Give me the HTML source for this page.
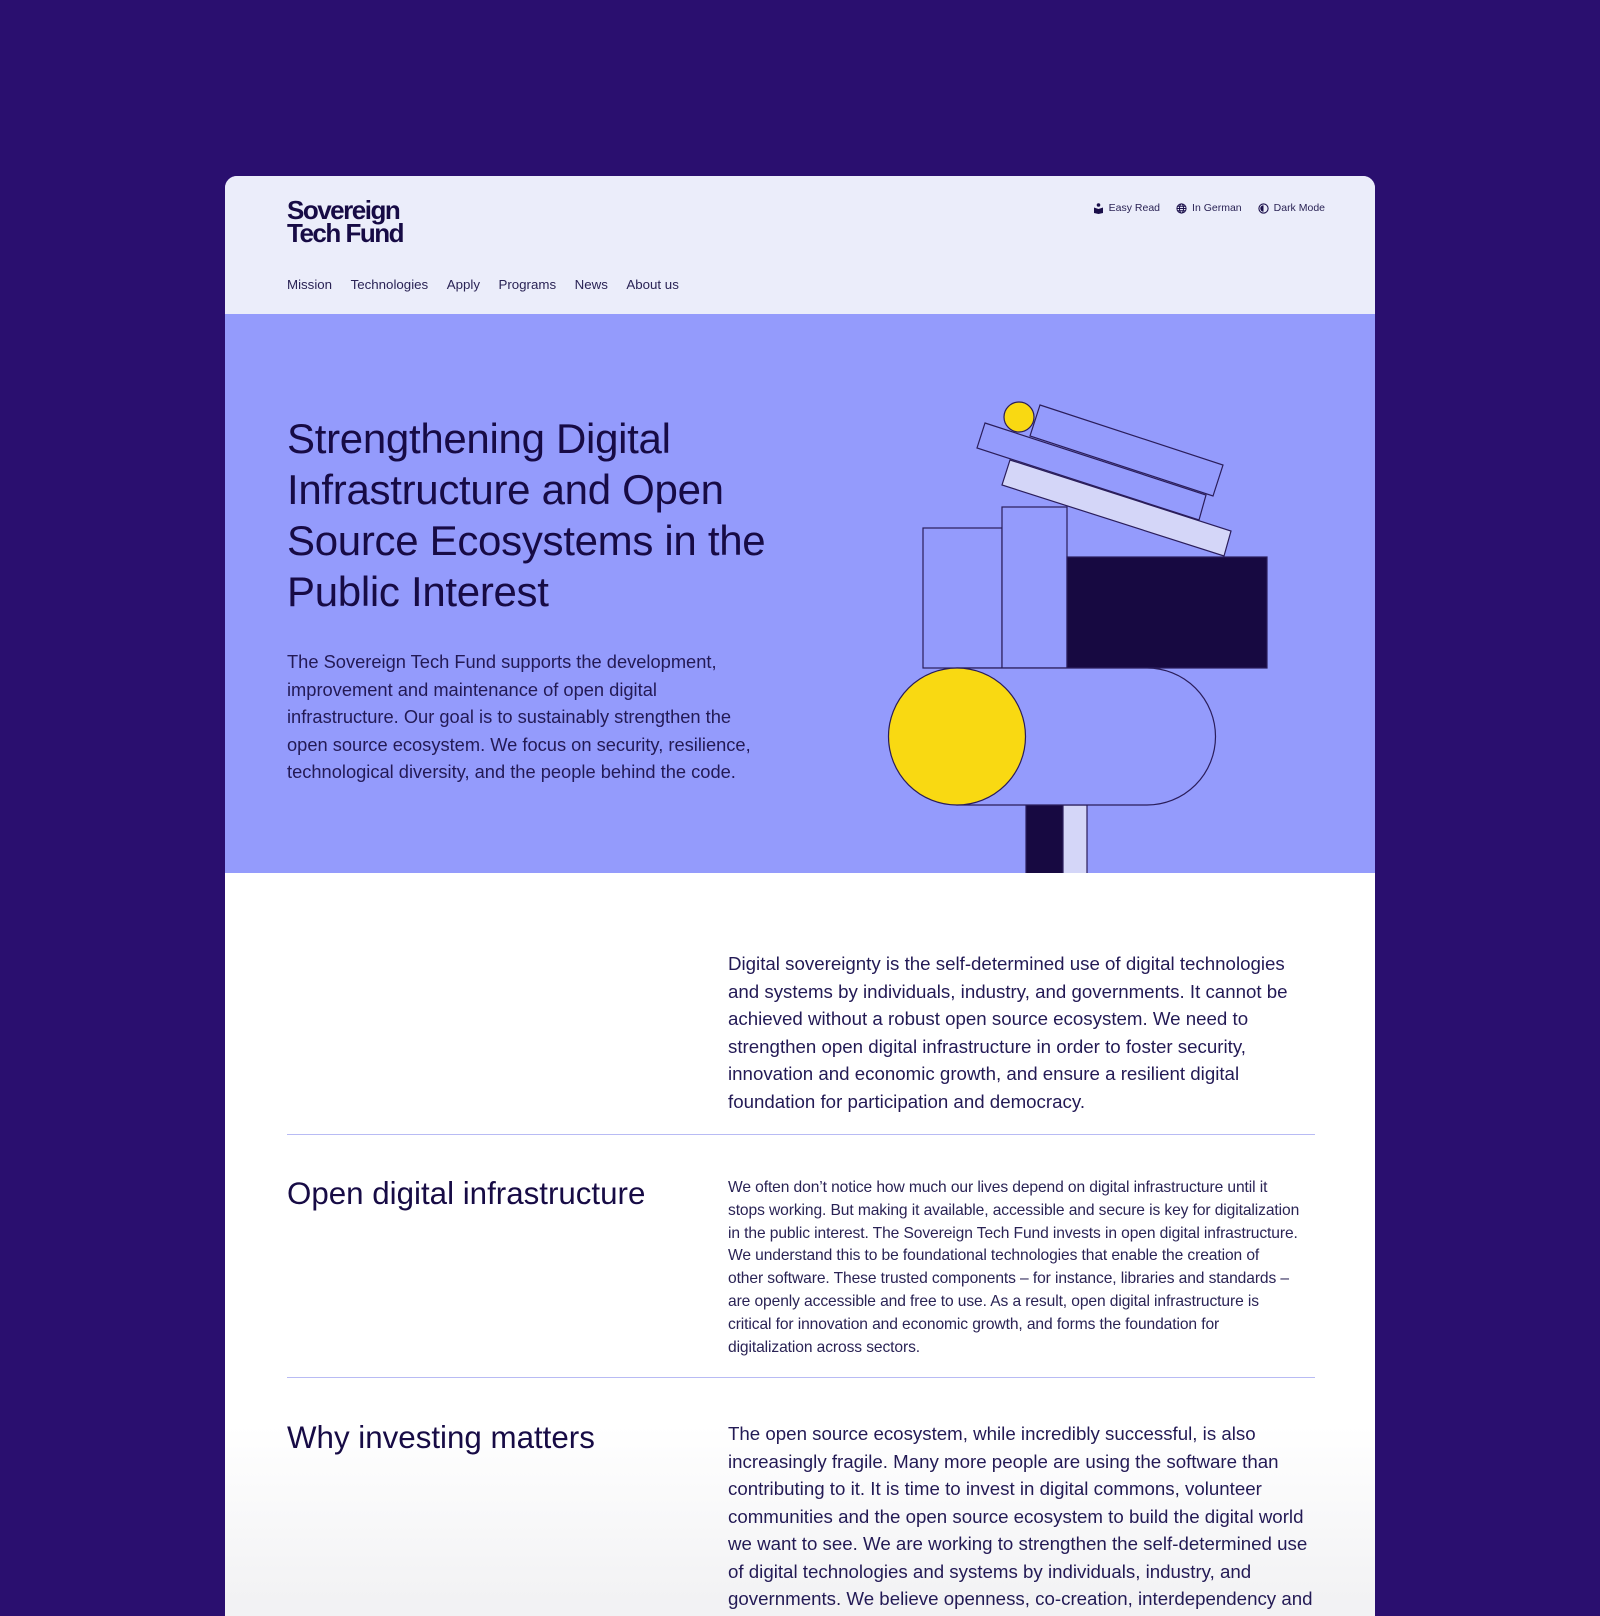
<!DOCTYPE html>
<html><head><meta charset="utf-8"><style>
*{margin:0;padding:0;box-sizing:border-box}
body{width:1600px;height:1600px;background:#2a0f6f;font-family:"Liberation Sans",sans-serif;color:#1a0f4a;overflow:hidden;position:relative}
.card{position:absolute;left:225px;top:176px;width:1150px;height:1440px;border-radius:12px 12px 0 0;overflow:hidden;background:linear-gradient(#fff 0,#fff 1250px,#f2f2f4 1426px)}
.hdr{position:absolute;left:0;top:0;width:1150px;height:138px;background:#ebedfa}
.logo{position:absolute;left:62px;top:23px;font-weight:bold;font-size:26px;line-height:23px;letter-spacing:-1.5px;color:#170b45}
.nav{position:absolute;left:62px;top:101px;font-size:13.3px;color:#2a2355;white-space:nowrap}
.nav span{margin-right:18.5px}
.util{position:absolute;right:50px;top:26px;font-size:10.5px;color:#2a2355;white-space:nowrap;display:flex;gap:16px;align-items:center}
.util span{display:flex;align-items:center;gap:5px}
.hero{position:absolute;left:0;top:138px;width:1150px;height:559px;background:#949bfc}
h1{position:absolute;left:62px;top:99px;font-weight:normal;font-size:42px;line-height:51px;color:#170b45;white-space:nowrap;letter-spacing:-0.3px}
.hp{position:absolute;left:62px;top:334px;font-size:18.3px;line-height:27.5px;color:#231a55;white-space:nowrap}
.p1{position:absolute;left:503px;top:774px;font-size:18.7px;line-height:27.5px;white-space:nowrap;color:#231a55}
.hr{position:absolute;left:62px;width:1028px;height:1px;background:#b8bbf4}
h2{position:absolute;left:62px;font-weight:normal;font-size:31.3px;color:#170b45;white-space:nowrap}
.p2{position:absolute;left:503px;top:1001px;font-size:15.6px;line-height:22.8px;white-space:nowrap;color:#2a2355;letter-spacing:-0.1px}
.p3{position:absolute;left:503px;top:1244px;font-size:18.7px;line-height:27.5px;white-space:nowrap;color:#231a55}
</style></head><body>
<div class="card">
<div class="hdr">
<div class="logo">Sovereign<br>Tech Fund</div>
<div class="nav"><span>Mission</span><span>Technologies</span><span>Apply</span><span>Programs</span><span>News</span><span>About us</span></div>
<div class="util">
<span><svg width="11" height="11" viewBox="0 0 11 11"><circle cx="5.5" cy="2" r="1.8" fill="#1a0f4a"/><path d="M1 4.5 L5.5 6 L10 4.5 V10 L5.5 11 L1 10Z" fill="#1a0f4a"/></svg>Easy Read</span>
<span><svg width="11" height="11" viewBox="0 0 12 12" fill="none" stroke="#1a0f4a" stroke-width="1.1"><circle cx="6" cy="6" r="5"/><ellipse cx="6" cy="6" rx="2.2" ry="5"/><path d="M1 6H11M1.8 3.5H10.2M1.8 8.5H10.2"/></svg>In German</span>
<span><svg width="11" height="11" viewBox="0 0 12 12"><circle cx="6" cy="6" r="5" fill="none" stroke="#1a0f4a" stroke-width="1.2"/><path d="M6 2.5A3.5 3.5 0 0 0 6 9.5Z" fill="#1a0f4a"/></svg>Dark Mode</span>
</div>
</div>
<div class="hero">
<h1>Strengthening Digital<br>Infrastructure and Open<br>Source Ecosystems in the<br>Public Interest</h1>
<div class="hp">The Sovereign Tech Fund supports the development,<br>improvement and maintenance of open digital<br>infrastructure. Our goal is to sustainably strengthen the<br>open source ecosystem. We focus on security, resilience,<br>technological diversity, and the people behind the code.</div>
<svg style="position:absolute;left:0;top:0" width="1150" height="559" viewBox="217 307 1150 559">
<g stroke="#2a1d5a" stroke-width="1.2">
<polygon points="977,416 1198,488 1191,513 969,441" fill="#949bfc"/>
<polygon points="1032,398 1215,458 1205,489 1022,429" fill="#949bfc"/>
<polygon points="1002,453 1223,524 1216,549 994,478" fill="#d4d6f8"/>
<circle cx="1011" cy="410" r="15" fill="#f9d912"/>
<rect x="915" y="521" width="79" height="140" fill="#949bfc"/>
<rect x="994" y="500" width="65" height="161" fill="#949bfc"/>
<rect x="1059" y="550" width="200" height="111" fill="#170941"/>
<rect x="1018" y="798" width="37" height="80" fill="#170941"/>
<rect x="1055" y="798" width="24" height="80" fill="#d4d6f8"/>
<path d="M949 661 H1139 A68.5 68.5 0 0 1 1139 798 H949Z" fill="#949bfc"/>
<circle cx="949" cy="729.5" r="68.5" fill="#f9d912"/>
</g>
</svg>
</div>
<div class="p1">Digital sovereignty is the self-determined use of digital technologies<br>and systems by individuals, industry, and governments. It cannot be<br>achieved without a robust open source ecosystem. We need to<br>strengthen open digital infrastructure in order to foster security,<br>innovation and economic growth, and ensure a resilient digital<br>foundation for participation and democracy.</div>
<div class="hr" style="top:958px"></div>
<h2 style="top:1000px">Open digital infrastructure</h2>
<div class="p2">We often don’t notice how much our lives depend on digital infrastructure until it<br>stops working. But making it available, accessible and secure is key for digitalization<br>in the public interest. The Sovereign Tech Fund invests in open digital infrastructure.<br>We understand this to be foundational technologies that enable the creation of<br>other software. These trusted components – for instance, libraries and standards –<br>are openly accessible and free to use. As a result, open digital infrastructure is<br>critical for innovation and economic growth, and forms the foundation for<br>digitalization across sectors.</div>
<div class="hr" style="top:1201px"></div>
<h2 style="top:1244px">Why investing matters</h2>
<div class="p3">The open source ecosystem, while incredibly successful, is also<br>increasingly fragile. Many more people are using the software than<br>contributing to it. It is time to invest in digital commons, volunteer<br>communities and the open source ecosystem to build the digital world<br>we want to see. We are working to strengthen the self-determined use<br>of digital technologies and systems by individuals, industry, and<br>governments. We believe openness, co-creation, interdependency and</div>
</div>
</body></html>
